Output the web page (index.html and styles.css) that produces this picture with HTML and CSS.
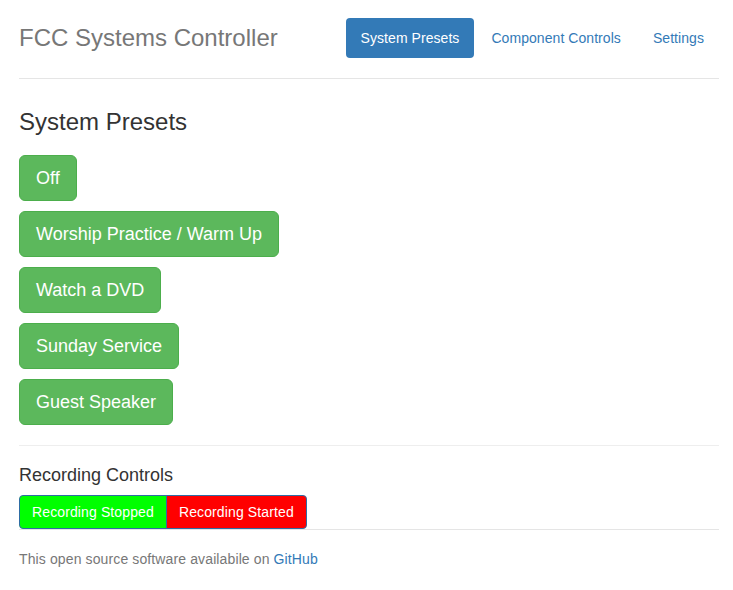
FILE: index.html
```html
<!DOCTYPE html>
<html>
<head>
<meta charset="utf-8">
<link rel="stylesheet" href="styles.css">
</head>
<body>
<div class="container">
  <div class="header">
    <h3 class="brand">FCC Systems Controller</h3>
    <nav class="nav">
      <a class="pill active" href="#">System Presets</a>
      <a class="pill" href="#">Component Controls</a>
      <a class="pill" href="#">Settings</a>
    </nav>
  </div>
  <div class="main">
    <h3 class="section-title">System Presets</h3>
    <div class="presets">
      <div><button class="btn-lg">Off</button></div>
      <div><button class="btn-lg">Worship Practice / Warm Up</button></div>
      <div><button class="btn-lg">Watch a DVD</button></div>
      <div><button class="btn-lg">Sunday Service</button></div>
      <div><button class="btn-lg">Guest Speaker</button></div>
    </div>
    <hr class="divider">
    <h4 class="sub-title">Recording Controls</h4>
    <div class="btn-group">
      <button class="rec rec-stopped">Recording Stopped</button>
      <button class="rec rec-started">Recording Started</button>
    </div>
  </div>
  <footer class="footer">
    <p>This open source software availabile on <a href="#">GitHub</a></p>
  </footer>
</div>
</body>
</html>
```

FILE: styles.css
```css
* { box-sizing: border-box; }
html, body { margin: 0; padding: 0; }
body {
  font-family: "Liberation Sans", Arial, sans-serif;
  font-size: 14px;
  line-height: 20px;
  color: #333;
  background: #fff;
}
.container {
  width: 700px;
  margin-left: 19px;
  padding-top: 18px;
}
.header {
  display: flex;
  align-items: center;
  justify-content: space-between;
  padding-bottom: 20px;
  border-bottom: 1px solid #e5e5e5;
}
.brand {
  margin: 0;
  font-size: 24px;
  font-weight: 400;
  line-height: 40px;
  color: #777;
}
.nav {
  display: flex;
  gap: 2px;
}
.pill {
  display: block;
  padding: 10px 15px;
  line-height: 20px;
  font-size: 14px;
  letter-spacing: 0.06px;
  color: #337ab7;
  text-decoration: none;
  border-radius: 4px;
}
.pill.active {
  background: #337ab7;
  color: #fff;
}
.section-title {
  margin: 30px 0 20px;
  font-size: 24px;
  font-weight: 500;
  line-height: 26.4px;
  color: #333;
}
.presets {
  display: flex;
  flex-direction: column;
  gap: 10px;
}
.btn-lg {
  font-family: inherit;
  padding: 10px 16px;
  font-size: 18px;
  line-height: 24px;
  color: #fff;
  background: #5cb85c;
  border: 1px solid #4cae4c;
  border-radius: 6px;
  cursor: pointer;
}
.divider {
  margin: 20px 0;
  border: 0;
  border-top: 1px solid #eee;
  height: 0;
}
.sub-title {
  margin: 0 0 9px;
  font-size: 18px;
  font-weight: 500;
  line-height: 19.8px;
  color: #333;
}
.btn-group {
  display: flex;
}
.rec {
  font-family: inherit;
  font-size: 14px;
  line-height: 20px;
  letter-spacing: 0.12px;
  padding: 6px 12px;
  color: #fff;
  border: 1px solid #2e6da4;
  cursor: pointer;
}
.rec-stopped {
  background: #00ff00;
  border-radius: 4px 0 0 4px;
}
.rec-started {
  background: #ff0000;
  border-radius: 0 4px 4px 0;
  margin-left: -1px;
}
.footer {
  padding-top: 19px;
  border-top: 1px solid #e5e5e5;
  color: #777;
  letter-spacing: 0.12px;
}
.footer p {
  margin: 0 0 10px;
}
.footer a {
  color: #337ab7;
  text-decoration: none;
}
```
